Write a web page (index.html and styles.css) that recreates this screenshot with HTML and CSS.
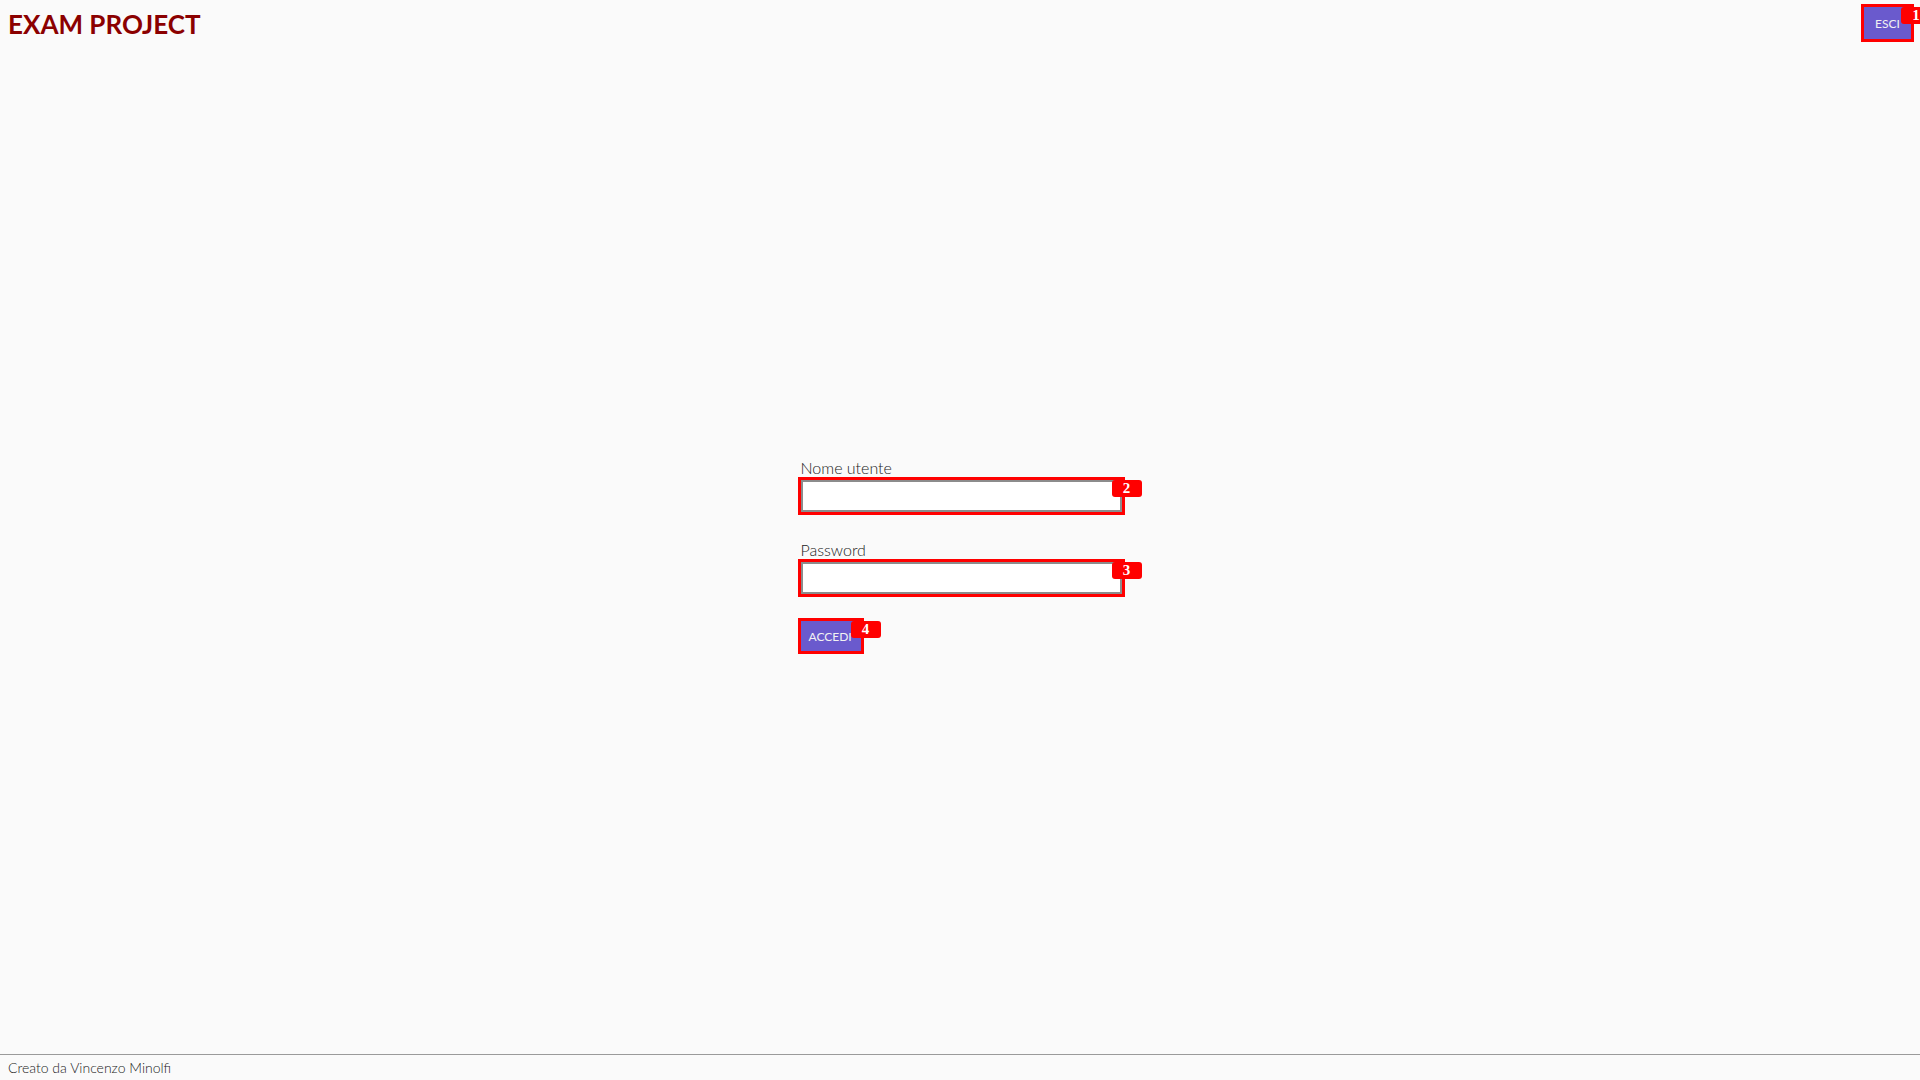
FILE: index.html
```html
<!DOCTYPE html>
<html lang="it">
<head>
<meta charset="utf-8">
<title>Exam Project</title>
<link rel="stylesheet" href="styles.css">
</head>
<body>
<div class="page">
  <header class="header">
    <h1 class="title">EXAM PROJECT</h1>
    <div class="marked">
      <button class="btn btn-esci" type="button">ESCI</button>
      <span class="badge">1</span>
    </div>
  </header>
  <main class="main">
    <form class="login">
      <label class="label" for="user">Nome utente</label>
      <div class="marked field">
        <input class="input" id="user" type="text">
        <span class="badge">2</span>
      </div>
      <label class="label label-gap" for="pass">Password</label>
      <div class="marked field">
        <input class="input" id="pass" type="password">
        <span class="badge">3</span>
      </div>
      <div class="marked submit">
        <button class="btn btn-accedi" type="button">ACCEDI</button>
        <span class="badge">4</span>
      </div>
    </form>
  </main>
  <footer class="footer">Creato da Vincenzo Minolfi</footer>
</div>
</body>
</html>
```
FILE: styles.css
```css
* { box-sizing: border-box; }
html, body { margin: 0; padding: 0; }
body {
  background: #fafafa;
  font-family: Lato, "Open Sans", "Liberation Sans", sans-serif;
  color: #222;
}
.page {
  min-height: 100vh;
  height: 1080px;
  display: flex;
  flex-direction: column;
  overflow: hidden;
}
.header {
  height: 44px;
  display: flex;
  justify-content: space-between;
  align-items: flex-start;
  padding: 7px 9px 0 8px;
}
.title {
  margin: 1px 0 0 0;
  font-size: 26px;
  font-weight: 700;
  color: #8b0000;
  line-height: normal;
}
.marked {
  position: relative;
  display: inline-block;
}
.btn {
  display: block;
  border: none;
  background: #6a5acd;
  color: #f2f2f2;
  font-family: Lato, "Open Sans", sans-serif;
  font-size: 12px;
  padding: 0;
  outline: 3px solid #ff0000;
  text-align: center;
  white-space: nowrap;
  overflow: hidden;
}
.btn-esci { width: 47px; height: 32px; }
.btn-accedi { width: 60px; height: 30px; text-align: left; padding-left: 8px; }
.badge {
  position: absolute;
  top: 0;
  right: -20px;
  width: 30px;
  height: 17px;
  background: #ff0000;
  color: #fff;
  border-radius: 3px;
  font-family: "Liberation Serif", "DejaVu Serif", serif;
  font-weight: 700;
  font-size: 15px;
  line-height: 17px;
  text-align: center;
  z-index: 2;
}
.main {
  flex: 1;
  display: flex;
  justify-content: center;
  align-items: center;
  padding-top: 11px;
  padding-left: 3px;
}
.login {
  width: 322px;
  display: flex;
  flex-direction: column;
  align-items: flex-start;
}
.label {
  display: block;
  font-size: 16px;
  font-weight: 300;
  color: #222;
  line-height: normal;
}
.label-gap { margin-top: 28px; }
.field { margin-top: 3px; display: block; }
.input {
  display: block;
  width: 321px;
  height: 32px;
  border: 2px solid #8c8c8c;
  background: #fff;
  outline: 3px solid #ff0000;
  padding: 2px 6px;
  font-family: Lato, sans-serif;
  font-size: 14px;
}
.submit { margin-top: 27px; }
.footer {
  height: 26px;
  border-top: 1px solid #9a9a9a;
  padding: 4px 8px 0;
  font-size: 14px;
  font-weight: 300;
  color: #222;
  line-height: normal;
}
```
